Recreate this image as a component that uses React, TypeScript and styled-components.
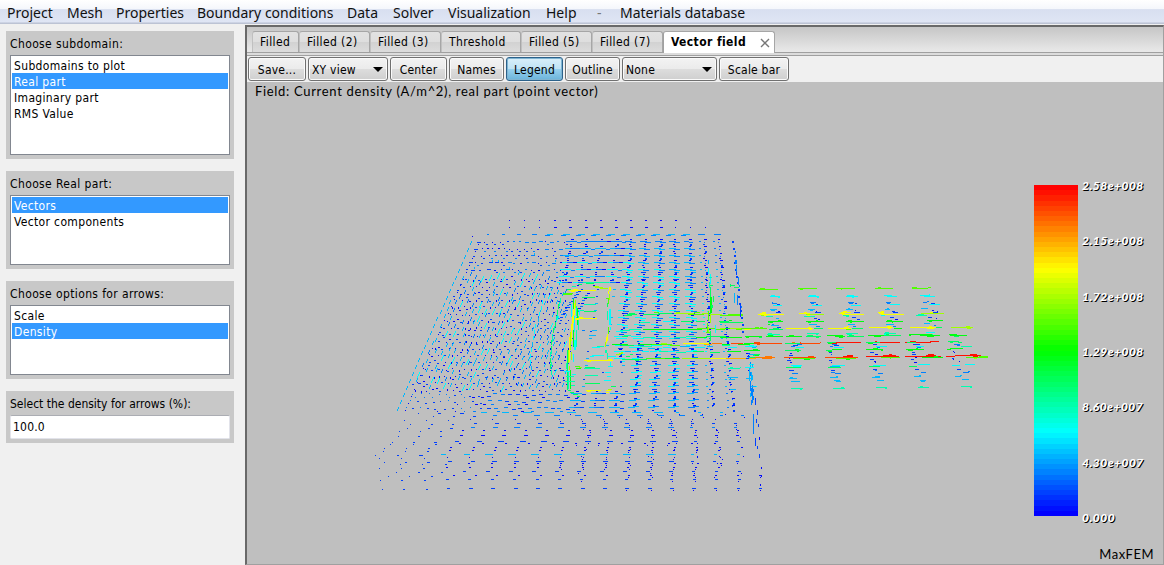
import React from 'react';
import styled, { createGlobalStyle } from 'styled-components';

const ui = "'DejaVu Sans Condensed', 'DejaVu Sans', sans-serif";

const Global = createGlobalStyle`
  * { box-sizing: border-box; }
  body { margin: 0; background: #f0f0f0; overflow: hidden; }
`;
const Window = styled.div`
  display: flex; flex-direction: column; width: 1164px; height: 565px;
  font: 12px/16px ${ui}; color: #000; white-space: nowrap;
`;
const MenuBar = styled.nav`
  display: flex; height: 24px; padding-left: 7px; flex: none;
  background: linear-gradient(#fff 0, #f5f7fc 36%, #d8dff0 40%, #dfe5f4 92%, #b4bccf 96%, #c5cbda);
  font: 14px/25px 'Noto Sans', 'Open Sans', sans-serif;
`;
const MenuItem = styled.span<{ $w: number; $dim?: boolean }>`
  width: ${p => p.$w}px; color: ${p => (p.$dim ? '#777' : '#111')};
`;
const Body = styled.div`display: flex; flex: 1; min-height: 0; padding-top: 1px;`;
const Sidebar = styled.aside`
  display: flex; flex-direction: column; gap: 12px; width: 245px; padding: 6px 11px 0 6px; flex: none;
`;
const Panel = styled.section`background: #c8c8c8; padding: 4px;`;
const Label = styled.div<{ $tight?: boolean }>`
  height: 20px; line-height: 18px; letter-spacing: ${p => (p.$tight ? 0 : 0.38)}px;
`;
const List = styled.div<{ $h: number }>`
  height: ${p => p.$h}px; border: 1px solid #828790; background: #fff; padding: 1px;
`;
const Option = styled.div<{ $on?: boolean }>`
  height: 16px; padding-left: 2px; line-height: 18px; letter-spacing: 0.34px;
  background: ${p => (p.$on ? '#3399ff' : 'transparent')}; color: ${p => (p.$on ? '#fff' : '#000')};
`;
const Input = styled.input`
  display: block; width: 220px; height: 24px; padding: 0 2px; font: 12px ${ui}; letter-spacing: 0.2px;
  border: 1px solid #e2e3ea; border-top-color: #abadb3; border-radius: 2px; background: #fff; outline: none;
`;
const View = styled.main`
  display: flex; flex-direction: column; flex: 1; min-width: 0;
  border: solid #696969; border-width: 2px 1px 1px 2px; border-right-color: #a0a0a0; border-bottom-color: #a0a0a0;
  background: #bfbfbf;
`;
const Tabs = styled.div`
  display: flex; align-items: flex-end; height: 26px; padding-left: 5px; flex: none;
  background: linear-gradient(#c6c6c6, #e9e9e9); border-bottom: 1px solid #a0a0a0;
`;
const Tab = styled.div<{ $w: number; $on?: boolean }>`
  display: flex; width: ${p => p.$w}px; height: ${p => (p.$on ? 22 : 21)}px; padding-left: 7px; flex: none;
  margin-bottom: ${p => (p.$on ? -1 : 0)}px; line-height: 21px;
  border: 1px solid #a6a6a6; border-bottom: 0; border-radius: 3px 3px 0 0;
  border-left-color: ${p => (p.$on ? '#a0a0a0' : '#c0c0c0')};
  background: ${p => (p.$on ? '#fff' : 'linear-gradient(#e2e2e2 0, #dedede 50%, #d2d2d2 52%, #dcdcdc)')};
  font-weight: ${p => (p.$on ? 'bold' : 'normal')}; letter-spacing: 0.4px;
`;
const Close = styled.svg`margin: 6px 4px 0 auto;`;
const Toolbar = styled.div`
  display: flex; height: 29px; padding: 4px 0 0 1px; gap: 2px; flex: none;
  background: #f0f0f0; box-shadow: inset 0 2px #dcdcdc, inset 0 3px #a0a0a0;
`;
const Button = styled.div<{ $w: number; $on?: boolean; $select?: boolean }>`
  display: flex; align-items: center; justify-content: ${p => (p.$select ? 'space-between' : 'center')};
  width: ${p => p.$w}px; height: 24px; padding: 1px ${p => (p.$select ? '4px 0 3px' : '0 0')};
  border: 1px solid ${p => (p.$on ? '#2c628b' : '#707070')}; border-radius: 3px; letter-spacing: 0.22px;
  background: ${p => (p.$on ? 'linear-gradient(#d9effa 0, #c0e3f5 48%, #98d1ef 50%, #6bb3da)' : 'linear-gradient(#f3f3f3 0, #ebebeb 48%, #dddddd 50%, #cfcfcf)')};
  box-shadow: inset 0 0 0 1px ${p => (p.$on ? '#7fb4d2' : '#fafafa')};
`;
const Arrow = styled.span`border: 5px solid transparent; border-top-color: #000; border-bottom: 0;`;
const Canvas = styled.div`position: relative; flex: 1; min-height: 0; background: #bfbfbf;`;
const Plot = styled.svg`position: absolute; left: -247px; top: -82px; width: 1164px; height: 565px;`;
const Caption = styled.div`
  position: absolute; left: 8px; top: 1px; font: 13px/17px Lato, sans-serif; letter-spacing: 0.68px;
`;
const Brand = styled.div`position: absolute; right: 9px; bottom: 1px; font: 13px/17px Lato, sans-serif; letter-spacing: 0.5px;`;
const Legend = styled.div`
  position: absolute; left: 787px; top: 103px; display: flex; flex-direction: column; width: 44px; height: 331px;
`;
const Band = styled.div<{ $hue: number }>`flex: 1; background: hsl(${p => p.$hue} 100% 50%);`;
const Scale = styled.div`
  position: absolute; left: 835px; top: 97px; height: 346px; display: flex; flex-direction: column;
  justify-content: space-between; font: italic 900 12px/14px Lato, sans-serif; letter-spacing: 0.48px;
  color: #fff; text-shadow: 1px 1px #000;
`;

const palette: Record<string, string> = {
  n: '#0008ff', b: '#0040ff', m: '#0080ff', s: '#00b8ff', c: '#00ffff', t: '#00ffb0', h: '#00ff60',
  e: '#00ff10', l: '#50ff00', k: '#a0ff00', y: '#f8ff00', a: '#ffb000', o: '#ff7800', d: '#ff4800', r: '#ff1000',
};

// Each mark is colour, x, y, width, height (optional), in thirds of a pixel from the block's origin.
const strip = `l57 57 57;l60 54 15;l174 54 57;l180 57 9;l288 54 57;l303 57 3;l405 54 54;l414 51 9;l516 54 48;l516 51 15;l564 51 9;
c90 78 30;c93 75 12;c114 81 6;c204 78 33;c207 75 21;c231 81 6;c318 78 36;c321 75 21;c336 81 6;c432 75 24;c441 78 30;c540 75 30;c552 78 33;c567 72 3;
m96 96 3;m96 99 15;b111 102 9;c99 105 26;m210 96 18;m213 99 9;b228 102 6;c216 105 30;m324 96 18;m327 99 12;b345 99 6;c333 105 30;m438 96 15;m441 99 9;c450 102 30;m549 96 12;m561 93 6;c567 102 32;b573 99 12;
s90 117 21;s93 120 12;n114 123 6;b108 126 15;s204 117 21;s210 120 9;n228 123 3;b225 126 18;s318 117 21;s324 114 6;b342 126 18;n345 120 3;s435 117 15;s441 114 6;b456 123 9;b459 126 15;s544 114 20;n576 120 6;n591 123 3;b579 126 15;
y54 132 78;y66 126 12;y60 129 12;y72 135 9;y177 129 33;y192 126 9;k198 132 54;y201 135 9;y297 129 18;y309 123 12;y303 126 30;y306 132 66;t310 135 18;y414 126 18;y423 123 9;y417 129 16;y423 132 69;k543 129 69;y570 126 9;t528 135 33;t534 132 18;
t78 138 21;t192 138 33;t318 138 9;c423 135 12;s108 144 9;n114 150 9;b222 144 9;n234 147 6;b336 141 12;b351 147 9;b450 141 12;n465 147 9;b564 141 12;n588 144 3;
e84 153 45;e90 156 9;e114 150 9;e198 153 54;e204 156 9;e228 150 6;e318 153 54;e324 150 12;e330 156 6;e438 153 51;e441 150 15;e456 156 3;e561 150 48;e567 153 9;
s93 165 24;m96 162 6;b111 171 12;s207 162 24;m228 168 12;s324 162 20;m339 168 9;s438 162 24;m459 168 9;s552 159 18;m582 165 6;
l3 174 78;y12 177 21;l60 171 9;h87 177 42;h99 174 18;y138 174 81;y204 171 9;y207 177 9;h222 174 27;y264 174 69;y312 171 12;y321 168 6;l318 177 15;h336 174 33;y387 171 72;y441 168 12;y444 174 9;e462 174 24;y510 171 78;y561 174 21;y567 168 9;h588 171 18;k633 171 66;k678 168 12;k681 174 12;
t81 192 39;t84 189 12;c90 195 12;t201 189 36;t201 195 18;t228 192 6;t318 189 36;t321 192 15;t432 189 36;t435 186 12;c432 192 15;c557 186 28;t552 192 27;
e15 198 51;e18 201 9;e78 198 51;e84 195 15;e138 198 48;e147 195 15;h198 198 45;h204 195 15;h228 201 9;e261 195 48;e285 198 30;e297 201 12;h321 198 51;h327 195 15;e384 195 54;e402 198 21;h432 195 51;h438 192 9;e508 192 60;e507 195 6;e540 195 60;e561 198 21;e567 192 9;e627 192 24;e630 195 51;h642 198 15;
d0 219 9;d12 219 114;d42 216 18;e12 219 30;d54 222 6;h135 219 45;o156 216 9;d180 219 60;d180 216 3;d240 216 3;h261 216 42;e264 219 24;r288 216 75;r276 219 15;h378 216 54;e384 219 15;r420 216 60;r405 213 6;h498 216 30;r495 216 6;r510 213 18;r528 216 45;r570 213 27;h624 213 33;h630 216 9;h654 216 12;
c27 225 15;c15 228 33;s36 231 12;b159 225 15;m171 222 15;m153 228 12;c168 231 24;b282 225 15;m276 222 15;m270 228 9;c282 231 30;b399 222 12;c408 228 33;m411 231 9;b519 222 21;c528 228 24;m531 231 12;m642 222 18;m651 225 9;t663 228 33;
e12 240 48;e39 237 15;h135 240 48;e165 237 12;e171 243 6;h258 240 18;e276 237 30;e264 243 12;e378 237 51;e399 234 15;e423 240 6;e498 237 54;e504 240 15;e528 234 6;e621 237 12;e630 234 39;n639 243 3;n642 246 3;
n18 249 6;b21 258 9;s27 252 18;h42 252 18;s24 261 6;n150 249 6;b147 255 12;n147 264 3;b267 246 9;b273 252 3;n273 261 6;b390 246 12;n405 252 9;n405 276 3;b516 246 9;b516 252 12;n525 261 6;
a0 264 48;o48 261 57;o78 258 18;o78 264 18;e45 255 12;d132 261 96;d204 258 18;l159 264 66;e192 267 18;d255 261 99;r309 258 30;r321 255 18;l288 264 60;e318 267 12;r378 258 99;r429 255 39;r447 252 9;l423 261 57;l450 264 3;r495 258 108;r564 252 18;r558 255 30;e546 261 63;e582 258 12;r618 258 27;r645 255 78;r690 252 21;r699 258 15;l678 261 66;l717 258 27;k702 264 9;
b18 264 9;b141 270 12;n150 276 6;b267 270 9;n273 276 3;b390 267 12;n402 273 6;b513 267 9;n522 276 9;b636 264 6;n639 267 3;n657 273 3;
s36 282 3 9;s30 285 3 12;c18 291 24;t0 291 3;c153 285 33;c159 288 24;h138 291 45;c276 285 39;s270 288 30;h264 291 39;c399 285 39;h387 288 33;c534 282 36;h507 288 24;c636 285 24;c675 282 30;
n24 300 3;m30 306 3 12;b147 300 15;m156 309 18;b273 300 12;m273 306 12;m285 309 18;b399 297 12;m405 300 6;m414 309 15;b525 297 12;m543 306 15;b651 297 12;m669 306 18;m684 303 6;
s18 324 18;s27 312 3 21;s36 315 3 15;s147 324 24;s150 321 9;s270 321 24;s288 318 6;s396 321 24;s405 318 15;s522 318 21;s537 315 6;s645 318 18;s660 315 6;
m30 336 3 12;m36 345 3 9;s153 333 27;s282 330 18;s288 333 15;s411 330 21;s540 330 18;s543 333 12;s666 327 21;
s33 348 15;m33 354 3 24;m39 357 3 9;m39 378 3 12;t153 354 36;t180 357 6;t279 354 36;t303 351 9;t408 351 33;t435 354 6;t534 351 33;t540 348 9;t663 348 33;t690 351 6`;

const core = `k99 258 18;k105 261 24;k120 264 24;h66 291 40;t72 312 36;h72 333 36;t52 330 20;l9 282 28;l15 279 24;
k147 282 3 18;l144 297 3 15;h141 309 3 12;l138 294 9;c147 327 6 48;t141 333 3 27;
e39 297 3 30;k45 300 3 24;t48 318 3 30;e51 324 3 50;t54 348 3 42;c42 348 3 48;e39 390 3 50;t48 390 3 50;c42 420 6 30;c33 312 3 40;c57 330 3 15;
y27 270 81;y39 267 15;y33 273 12;y45 354 66;y57 351 12;y45 357 12;y147 261 6 12;y144 273 3 9;y42 309 3 36;y39 330 3 40;y36 348 3 42;y33 372 3 50;k30 396 3 54;y27 410 3 40;
l144 381 3 21;y141 402 3 21;y138 411 3 18;k135 426 3 15;c150 381 3 10;
h201 342 30;h207 339 18;h249 342 48;h294 339 42;l282 336 15;k342 339 60;k348 336 12;l384 342 48;l402 336 18;k426 339 18;k444 342 42;l480 345 68;l504 342 45;h192 345 24;
h477 363 30;h480 366 69;e507 360 9;h363 363 35;h408 363 28;t240 366 30;c309 363 30;
t180 390 30;t207 387 36;e249 387 177;l411 384 54;l465 387 30;k480 384 72;l528 387 18;k555 384 66;l585 381 12;e624 372 6;e495 384 15;
h174 408 30;t192 405 20;c213 408 30;t249 411 36;c294 408 36;t342 411 36;t378 408 30;e408 411 33;h438 408 60;e480 411 66;e555 408 51;h597 411 9;
e156 432 48;h186 435 36;e234 432 42;l276 432 60;l330 435 30;y369 429 78;a432 432 24;o456 429 30;e486 432 24;d513 429 36;e534 432 36;d582 429 48;d585 426 15;d591 432 9;k303 429 18;t111 438 20;
h450 261 3 81;e450 291 6 48;h447 255 12;t447 246 3 18;h459 288 3 18;l444 333 3 30;k450 345 3 24;l441 369 3 30;k444 381 3 18;l438 396 12;h450 393 3 30;c465 375 3 24;h447 420 3 9;
c444 204 3 18;c450 222 3 30;s444 180 3 12;h453 315 6 9;t447 231 9;
h510 252 3 9;h513 255 12;h522 261 15;m525 180 6 12;m528 201 3 20;m534 231 3 24;s522 279 3 30;m531 285 3 30;b540 315 3 36;b528 216 3 9;
l597 267 33;l600 264 15;y594 342 33;y606 339 12;k603 345 12;t618 348 12;h624 366 6;
s87 405 20;s96 390 15;c162 408 24;m66 390 10;c96 441 24;c207 441 36;t240 438 36;s264 444 20;c309 441 24;s360 438 30;c405 441 30;s441 438 18;t486 435 24;c504 441 27;s555 438 36;`;

const lower = `h21 0 3 120;k24 0 3 40;y27 0 3 36;k33 6 3 24;c39 12 3 24;t18 39 3 18;k27 48 3 12;e30 60 3 56;t24 66 3 50;c36 72 12;c12 63 18;t18 78 24;t15 93 30;t33 105 12;l45 48 15;e48 54 15;k57 51 9;
y72 30 87;y81 33 12;t72 54 48;h75 51 30;t75 75 40;h75 99 45;y78 120 45;y81 123 12;y138 120 15;h24 120 9;h30 126 12;h39 132 15;h51 138 9;y138 126 9;k144 117 12;h153 108 15;k168 12 15;k177 9 12;k183 6 6;h198 18 12;h210 12 9;t141 9 3 18;t135 0 6 9;
y120 30 40;y144 27 12;c150 36 3 12;c144 48 15;c135 66 18;c141 78 12;c132 90 20;
h186 27 75;h225 30 12;l258 24 60;e315 24 45;k366 24 84;y450 24 48;a498 24 84;o582 21 48;o615 18 15;o606 24 20;h552 0 48;h570 21 15;h579 15 12;h588 12 9;
c246 3 21;t297 3 27;t348 6 30;h399 3 33;h450 6 30;e501 3 42;s195 3 18;c96 15 36;c90 18 12;c144 18 24;
m570 36 3 18;s567 54 3 24;s573 66 3 28;m570 93 3 30;m576 108 3 50;s570 129 3 12;m573 150 3 15;m579 192 3 30;b585 144 3 20;b591 180 3 15;b588 207 3 12;m579 222 3 30;b585 264 3 24;b591 288 3 9;b597 312 3 12;b594 222 3 9;n597 261 3 9;n603 351 3 6;n603 375 3 6;n600 402 3 6;
c579 108 12;c558 84 15;b561 9 9;n564 15 3 9;c555 51 27;c567 42 15;t504 54 36;t510 51 9;s504 81 30;s507 87 18;s510 117 18`;

type BlockProps = { x: number; y: number; data: string };
function Block({ x, y, data }: BlockProps) {
  return (
    <g transform={`translate(${x} ${y}) scale(${1 / 3})`}>
      {data.split(';').map(s => s.trim()).filter(Boolean).map((s, i) => {
        const [px, py, w, h = 3] = s.slice(1).split(' ').map(Number);
        const q = (v: number) => Math.round(v / 3) * 3;
        return <rect key={i} x={q(px)} y={q(py)} width={Math.max(3, q(w))} height={Math.max(3, q(h))} fill={palette[s[0]]} />;
      })}
    </g>
  );
}

const noise = (a: number, b: number) => {
  const v = Math.sin(a * 127.1 + b * 311.7) * 43758.5453;
  return v - Math.floor(v);
};

type Mark = { x: number; y: number; w: number; h: number; c: string };

// Rows below the coil: y, first x, last x, count, longest dash, colour.
const frontRows: [number, number, number, number, number, string][] = [
  [412, 418, 724, 15, 9, 's'], [415, 433, 744, 16, 6, 'm'], [419, 404, 715, 15, 1, 'n'],
  [423, 410, 736, 16, 4, 'b'], [427, 407, 737, 16, 6, 'm'], [430, 399, 738, 17, 2, 'n'],
  [435, 398, 738, 17, 4, 'n'], [441, 392, 740, 17, 6, 'b'], [443, 390, 715, 15, 2, 'n'],
  [447, 384, 742, 17, 2, 'n'], [450, 383, 719, 16, 2, 'n'], [454, 375, 741, 17, 8, 's'],
  [457, 379, 720, 16, 1, 'n'], [461, 384, 738, 17, 5, 'b'], [463, 400, 721, 15, 2, 'n'],
  [467, 379, 719, 16, 2, 'n'], [471, 396, 740, 16, 4, 'b'], [475, 388, 760, 18, 2, 'n'],
  [479, 380, 739, 17, 3, 'b'], [488, 382, 761, 18, 4, 'b'],
];

// Circulating current on the plate: weak at the rim, stronger towards the coil.
function plateMarks(): Mark[] {
  const out: Mark[] = [];
  const put = (x: number, y: number, w: number, h: number, c: string) =>
    out.push({ x: Math.round(x), y: Math.round(y), w, h, c: palette[c] });

  for (let k = 0; k < 12; k++) put(509 + k * 15.1, 220, k > 2 ? 2 : 1, 1, 'n');
  for (let k = 0; k < 14; k++) put(509 + k * 15.1, 227, k > 2 && k < 11 ? 3 : 1, 1, 'n');
  put(472, 236, 1, 1, 'n');
  for (let k = 0; k < 16; k++) {
    const strong = k > 3 && k < 14;
    put(487 + k * 15.1, 234, Math.min(7, 2 + k), 1, strong ? 's' : 'm');
    if (strong) put(485 + k * 15.1, 235, 5, 1, 'm');
  }

  for (let r = 0; r < 25; r++) {
    const y = 241 + r * 6.9;
    const left = 472 - 0.439 * (y - 236);
    const right = 733 + 0.1134 * (y - 240);
    const top = y < 274;
    const low = y > 388;
    const flank = 548;

    // left side, where the layers overlap at different depths
    let i = 0;
    for (let x = left + 1; x < 566; i++) {
      const n = noise(i, r);
      const n2 = noise(i + 40, r + 7);
      const near = (x - left) / (566 - left);
      if (i === 0) {
        put(x, y, 1, 2, 's');
        put(x - 1, y + 2, 1, 2, 's');
        put(x + 7, y + 3, 1, 1, 'n');
      } else if (top) {
        put(x, y + (n2 > 0.6 ? 1 : 0), n > 0.7 ? 1 : n > 0.35 ? 2 : 4, 1, n > 0.55 ? 'n' : near > 0.4 ? 'm' : 'b');
        if (n > 0.66) put(x + 2, y + 3, 2, 1, n2 > 0.5 ? 'b' : 'm');
        if (n < 0.2 && y > 250) put(x + 3, y - 2, 1, 2, 's');
      } else if (low) {
        put(x, y + n * 3, near > 0.5 ? 4 : n > 0.5 ? 2 : 1, 1, n > 0.45 ? 'b' : 'm');
        if (n2 > 0.5) put(x + 3, y + 4, near > 0.4 ? 3 : 1, 1, n > 0.5 ? 'n' : 'm');
      } else {
        const jy = (n2 - 0.5) * 5;
        const tone = n < 0.2 ? 'c' : n < 0.5 ? 's' : n < 0.72 ? 'm' : n < 0.88 ? 'b' : 'n';
        if (n < 0.72) {
          put(x, y + jy, 1, 2, tone);
          put(x + 1, y + jy - 2, 1, 2, tone);
          if (n < 0.2) put(x - 1, y + jy + 2, 1, 2, tone);
        } else put(x, y + jy, 2, 1, tone);
        put(x + 3, y + 3 + n * 2, n2 > 0.6 ? 2 : 1, n2 < 0.3 ? 2 : 1, n2 > 0.65 ? 'b' : 'n');
      }
      x += 4.8 + n2 * 3.4 + (low ? 1.6 : 0);
    }

    // columns from the coil to the right edge
    const step = 14.7 + r * 0.21;
    for (let k = 0; right - k * step > 562; k++) {
      const x = right - k * step;
      const n = noise(k + 3, r + 20);
      if (x < 618 && y > 283 && y < 386) {
        if (n > 0.35) put(x + 4, y, n > 0.7 ? 3 : 2, 1, n > 0.7 ? 's' : 'b');
        continue;
      }
      if (k === 0) {
        if (y < 335) put(x - 1, y, 2, 2, 'b');
        if (y < 335 && n > 0.5) put(x + 1, y + 3, 1, 2, 'm');
        continue;
      }
      const dist = Math.hypot((x - 600) / 190, (y - 335) / 125);
      const tone = y < 246 || low ? (dist < 0.75 ? 's' : 'm') : dist < 0.62 ? 'c' : dist < 0.86 ? 's' : 'm';
      const w = k < 3 ? 2 : dist < 0.85 ? 7 : 5;
      const drop = y < 335 && x > 620 ? 1 : y > 350 && x > 620 ? -1 : 0;
      put(x - 5, y, w, 1, tone);
      put(x, y + drop, w - 1, 1, n > 0.5 ? tone : 'm');
      if (y > 262 && y < 390 && x > 618) put(x - 3 + n * 5, y + 3, k < 3 ? 2 : 5, 1, n > 0.55 ? tone : 'b');
      put(x, y - 2, n > 0.5 ? 3 : 2, 1, 'n');
      if (n > 0.25) put(x + (n > 0.6 ? 1 : -1), y + 3, 2, n > 0.6 ? 2 : 1, n > 0.5 ? 'b' : 'n');
      if (x < 618) put(x + 6, y + (n > 0.5 ? 1 : 0), 4, 1, low ? 'b' : n > 0.4 ? 'm' : 'n');
    }
  }

  frontRows.forEach(([y, x0, x1, count, len, c], r) => {
    for (let k = 0; k < count; k++) {
      const x = x0 + ((x1 - x0) * k) / (count - 1);
      const w = Math.max(1, Math.round(Math.min(len, 1 + (k * len) / 6)));
      const end = k > count - 4;
      put(x - w / 2, y + (k < 3 ? 1 : 0), end ? Math.min(3, w) : w, 1, k < 3 ? 'b' : c);
      if (k > count - 9 && noise(k, r) > 0.3) put(x + (noise(r, k) - 0.5) * 4, y + 2, 1, 1, 'n');
    }
  });

  // outer edge of the coil
  const arc = [[578, 284], [572, 286], [567, 289], [563, 293], [560, 298], [558, 304], [557, 310], [556, 316],
    [555, 322], [553, 328], [552, 334], [551, 340], [551, 346], [550, 352], [550, 358], [550, 364], [551, 370]];
  arc.forEach(([x, y], i) => {
    put(x, y, i < 4 ? 4 : 1, i < 4 ? 1 : 5, i % 3 === 1 ? 't' : 'h');
    if (i > 3 && i % 2) put(x + 1, y - 2, 1, 4, 't');
    if (i > 3) put(x - 14 - i * 0.4, y - 4, 1, 4, i % 4 === 0 ? 's' : 'c');
  });
  // inner fan of short arrows following the bend
  for (let i = 0; i < 9; i++) {
    put(578 - i * 2.2, 291 + i * 3.2, 3, 1, 'b');
    put(576 - i * 2.2, 292 + i * 3.2, 2, 1, 'm');
    put(588 - i * 1.4, 290 + i * 2.6, 3, 1, i % 2 ? 'n' : 'm');
  }
  put(583, 282, 26, 1, 't');
  put(586, 283, 8, 1, 'h');
  return out;
}

const legendBands = Array.from({ length: 64 }, (_, i) => (i * 240) / 63);
const scaleLabels = ['2.58e+008', '2.15e+008', '1.72e+008', '1.29e+008', '8.60e+007', '4.30e+007', '0.000'];

const menu: [string, number][] = [
  ['Project', 60], ['Mesh', 49], ['Properties', 81], ['Boundary conditions', 150], ['Data', 46],
  ['Solver', 55], ['Visualization', 98], ['Help', 51], ['-', 23], ['Materials database', 140],
];
const tabs: [string, number][] = [
  ['Filled', 47], ['Filled (2)', 71], ['Filled (3)', 71], ['Threshold', 80], ['Filled (5)', 71], ['Filled (7)', 71],
];

type ChooserProps = { label: string; height: number; options: string[]; selected: number };
const Chooser = ({ label, height, options, selected }: ChooserProps) => (
  <Panel>
    <Label>{label}</Label>
    <List $h={height}>
      {options.map((o, i) => <Option key={o} $on={i === selected}>{o}</Option>)}
    </List>
  </Panel>
);

export default function App() {
  return (
    <Window>
      <Global />
      <MenuBar>
        {menu.map(([t, w]) => <MenuItem key={t} $w={w} $dim={t === '-'}>{t}</MenuItem>)}
      </MenuBar>
      <Body>
        <Sidebar>
          <Chooser label="Choose subdomain:" height={100} selected={1}
            options={['Subdomains to plot', 'Real part', 'Imaginary part', 'RMS Value']} />
          <Chooser label="Choose Real part:" height={70} selected={0} options={['Vectors', 'Vector components']} />
          <Chooser label="Choose options for arrows:" height={70} selected={1} options={['Scale', 'Density']} />
          <Panel>
            <Label $tight>Select the density for arrows (%):</Label>
            <Input defaultValue="100.0" />
          </Panel>
        </Sidebar>
        <View>
          <Tabs>
            {tabs.map(([t, w]) => <Tab key={t} $w={w}>{t}</Tab>)}
            <Tab $w={112} $on>
              Vector field
              <Close width="10" height="10" viewBox="0 0 10 10">
                <path d="M1 1L9 9M9 1L1 9" stroke="#777" strokeWidth="1.4" fill="none" />
              </Close>
            </Tab>
          </Tabs>
          <Toolbar>
            <Button $w={58}>Save...</Button>
            <Button $w={80} $select>XY view<Arrow /></Button>
            <Button $w={57}>Center</Button>
            <Button $w={55}>Names</Button>
            <Button $w={57} $on>Legend</Button>
            <Button $w={55}>Outline</Button>
            <Button $w={95} $select>None<Arrow /></Button>
            <Button $w={70}>Scale bar</Button>
          </Toolbar>
          <Canvas>
            <Plot viewBox="0 0 1164 565" shapeRendering="crispEdges">
              {plateMarks().map((m, i) => <rect key={i} x={m.x} y={m.y} width={m.w} height={m.h} fill={m.c} />)}
              <Block x={560} y={200} data={core} />
              <Block x={560} y={350} data={lower} />
              <Block x={740} y={270} data={strip} />
            </Plot>
            <Caption>Field: Current density (A/m^2), real part (point vector)</Caption>
            <Legend>{legendBands.map(h => <Band key={h} $hue={h} />)}</Legend>
            <Scale>{scaleLabels.map(s => <span key={s}>{s}</span>)}</Scale>
            <Brand>MaxFEM</Brand>
          </Canvas>
        </View>
      </Body>
    </Window>
  );
}
